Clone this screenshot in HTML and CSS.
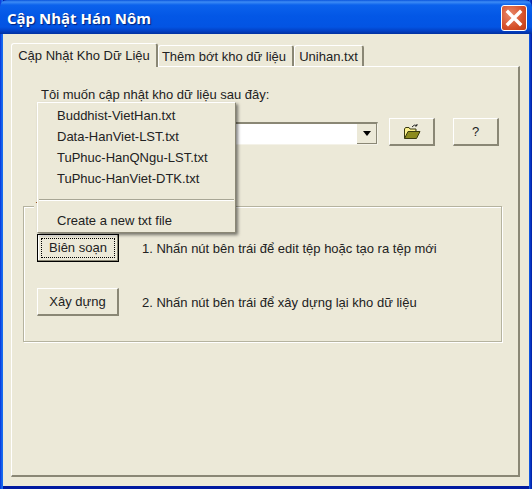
FILE: index.html
```html
<!DOCTYPE html>
<html>
<head>
    <title>Cập Nhật Hán Nôm</title>
    <link rel="stylesheet" href="styles.css">
</head>
<body>
    <div class="window">
        <div class="titlebar">
            <div class="title">Cập Nhật Hán Nôm</div>
            <div class="close-btn">
                <svg width="20" height="20" viewBox="0 0 20 20">
                    <path d="M4 4 L16 16 M16 4 L4 16" stroke="#fff" stroke-width="3.4" stroke-linecap="square"/>
                </svg>
            </div>
        </div>
        <div class="client">
            <div class="tabs">
                <div class="tab active">Cập Nhật Kho Dữ Liệu</div>
                <div class="tab tab-second">Thêm bớt kho dữ liệu</div>
                <div class="tab tab-third">Unihan.txt</div>
            </div>
            <div class="panel">
                <div class="prompt">Tôi muốn cập nhật kho dữ liệu sau đây:</div>
                <div class="picker-row">
                    <div class="combo">
                        <div class="combo-arrow"><div class="arrow-down"></div></div>
                    </div>
                    <div class="btn btn-small">
                        <svg width="18" height="16" viewBox="0 0 18 16">
                            <path d="M9 3 Q11 0 14 1.5 L14 0 M14 1.5 L12.5 2.5" fill="none" stroke="#222" stroke-width="1"/>
                            <path d="M1.5 5 L2.5 3.5 L6 3.5 L7 5 L13 5 L13 7 L1.5 14 Z" fill="#fbf08c" stroke="#3a3a10"/>
                            <path d="M1.5 14.5 L5 7.5 L17 7.5 L13.5 14.5 Z" fill="#8c8a1e" stroke="#3a3a10"/>
                        </svg>
                    </div>
                    <div class="btn btn-small btn-help">?</div>
                </div>
                <div class="group">
                    <div class="group-label">Thao tác</div>
                    <div class="group-row">
                        <div class="btn btn-wide btn-focus"><span class="focus-ring">Biên soạn</span></div>
                        <div class="step-text">1. Nhấn nút bên trái để edit tệp hoặc tạo ra tệp mới</div>
                    </div>
                    <div class="group-row">
                        <div class="btn btn-wide">Xây dựng</div>
                        <div class="step-text">2. Nhấn nút bên trái để xây dựng lại kho dữ liệu</div>
                    </div>
                </div>
            </div>
        </div>
        <div class="menu">
            <div class="menu-item">Buddhist-VietHan.txt</div>
            <div class="menu-item">Data-HanViet-LST.txt</div>
            <div class="menu-item">TuPhuc-HanQNgu-LST.txt</div>
            <div class="menu-item">TuPhuc-HanViet-DTK.txt</div>
            <div class="menu-sep"></div>
            <div class="menu-item">Create a new txt file</div>
        </div>
    </div>
</body>
</html>
```

FILE: styles.css
```css
html, body {
    margin: 0;
    height: 100%;
    background: #ece9d8;
}
body {
    font-family: 'Liberation Sans', Arial, sans-serif;
    font-size: 13px;
    color: #222;
}
.window {
    position: relative;
    width: 532px;
    height: 489px;
    box-sizing: border-box;
    display: flex;
    flex-direction: column;
    overflow: hidden;
    background: linear-gradient(to right, #0831d9 0, #166aee 2px, #166aee 3px, transparent 3px, transparent 529px, #166aee 529px, #0a3fd0 530px, #001ea0 532px), #0019a0;
}
.titlebar {
    height: 34px;
    flex: none;
    box-sizing: border-box;
    padding: 1px 5px 0 7px;
    display: flex;
    align-items: center;
    justify-content: space-between;
    border-radius: 7px 7px 0 0;
    background: linear-gradient(to bottom, #0a55dc 0, #3d8cf5 2px, #0b62ec 5px, #0357e6 16px, #0354e3 27px, #0340c4 31px, #02309f 34px);
}
.title {
    color: #fff;
    font-family: 'Open Sans', sans-serif;
    font-weight: 700;
    font-size: 15px;
    text-shadow: 1px 1px 1px #02207a;
}
.close-btn {
    width: 26px;
    height: 26px;
    box-sizing: border-box;
    border: 1px solid #fff;
    border-radius: 3px;
    background: radial-gradient(circle at 35% 35%, #e98a6c, #d5502a 60%, #c03a15);
    display: flex;
    align-items: center;
    justify-content: center;
}
.client {
    flex: 1;
    margin: 0 3px 3px;
    padding: 9px 9px 9px 8px;
    background: #ece9d8;
    display: flex;
    flex-direction: column;
}
.tabs {
    display: flex;
    height: 23px;
    flex: none;
    align-items: flex-end;
    position: relative;
    z-index: 1;
}
.tab {
    height: 21px;
    box-sizing: border-box;
    padding-top: 3px;
    text-align: center;
    background: #ece9d8;
    border-top: 1px solid #fff;
    border-left: 1px solid #fff;
    border-right: 2px solid #8a8775;
    border-radius: 3px 3px 0 0;
}
.tab.active {
    width: 147px;
    margin-bottom: -1px;
    padding-top: 4px;
    height: 24px;
}
.tab-second {
    width: 136px;
    padding-right: 3px;
}
.tab-third {
    width: 70px;
}
.panel {
    flex: 1;
    box-sizing: border-box;
    border-top: 1px solid #fff;
    border-left: 1px solid #fff;
    border-right: 2px solid #8a8775;
    border-bottom: 2px solid #8a8775;
    padding: 20px 19px 0 11px;
}
.prompt {
    padding-left: 18px;
    height: 16px;
    line-height: 16px;
}
.picker-row {
    display: flex;
    align-items: flex-start;
    margin-top: 15px;
    padding-left: 15px;
}
.combo {
    width: 340px;
    height: 23px;
    margin-top: 4px;
    box-sizing: border-box;
    background: #fff;
    border-top: 2px solid #8a8775;
    border-left: 2px solid #8a8775;
    border-right: 1px solid #f4f2e8;
    border-bottom: 1px solid #f4f2e8;
    display: flex;
    justify-content: flex-end;
}
.combo-arrow {
    width: 19px;
    background: #ece9d8;
    border-right: 1px solid #8a8775;
    border-bottom: 1px solid #8a8775;
    display: flex;
    align-items: center;
    justify-content: center;
}
.arrow-down {
    width: 0;
    height: 0;
    border-left: 4px solid transparent;
    border-right: 4px solid transparent;
    border-top: 5px solid #000;
}
.btn {
    box-sizing: border-box;
    height: 28px;
    display: flex;
    align-items: center;
    justify-content: center;
    background: #ece9d8;
    border-top: 1px solid #fff;
    border-left: 1px solid #fff;
    border-right: 2px solid #8a8775;
    border-bottom: 2px solid #8a8775;
}
.btn-small {
    width: 46px;
    margin-left: 11px;
}
.btn-help {
    margin-left: 18px;
}
.btn-wide {
    width: 82px;
    flex: none;
}
.btn-focus {
    border: 1px solid #000;
    box-shadow: inset -1px -1px 0 #8a8775, inset 1px 1px 0 #fff;
}
.focus-ring {
    width: 72px;
    height: 18px;
    line-height: 18px;
    text-align: center;
    border: 1px dotted #000;
}
.group {
    position: relative;
    height: 136px;
    margin-top: 60px;
    box-sizing: border-box;
    width: 479px;
    border: 1px solid #b5b39f;
    box-shadow: inset 1px 1px 0 #fff, 1px 1px 0 #fff;
    padding: 27px 0 0 13px;
    display: flex;
    flex-direction: column;
    gap: 26px;
}
.group-label {
    position: absolute;
    left: 10px;
    top: -8px;
    line-height: 15px;
    padding: 0 2px;
    background: #ece9d8;
}
.group-row {
    display: flex;
    align-items: center;
}
.step-text {
    margin-left: 23px;
}
.menu {
    position: absolute;
    left: 37px;
    top: 102px;
    width: 199px;
    height: 131px;
    box-sizing: border-box;
    padding-top: 2px;
    background: #ece9d8;
    border-top: 1px solid #fff;
    border-left: 1px solid #fff;
    border-right: 1px solid #8a8775;
    border-bottom: 1px solid #8a8775;
    box-shadow: 2px 2px 3px rgba(0, 0, 0, 0.5);
    z-index: 5;
}
.menu-item {
    height: 21px;
    line-height: 21px;
    padding-left: 19px;
}
.menu-sep {
    height: 0;
    margin: 10px 1px 9px 1px;
    border-top: 1px solid #a8a695;
    border-bottom: 1px solid #fff;
}
```
